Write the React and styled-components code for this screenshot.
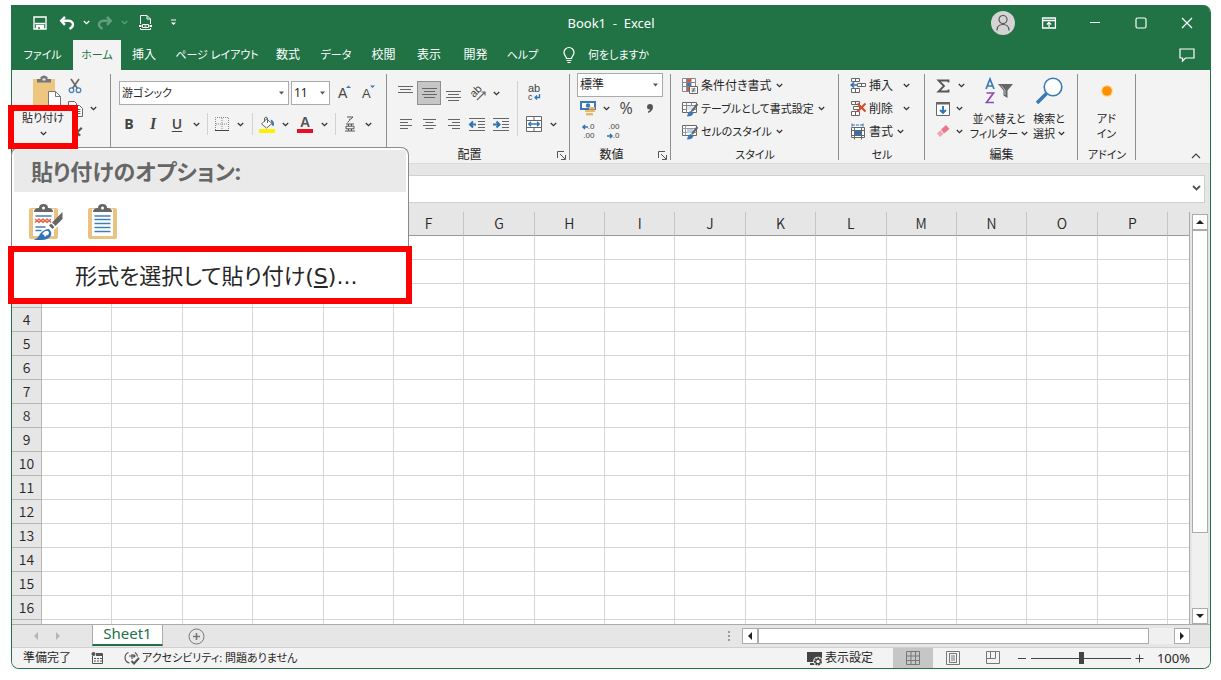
import React from 'react'
import styled, { createGlobalStyle, css } from 'styled-components'

const GlobalStyle = createGlobalStyle`
  * {
    box-sizing: border-box;
  }
  body {
    margin: 0;
    background: #fff;
    color: #262626;
    font-family: 'Noto Sans', 'Noto Sans CJK JP', sans-serif;
    font-size: 12px;
    line-height: 16px;
    font-feature-settings: 'palt';
  }
  button, input, select {
    font: inherit;
    font-feature-settings: inherit;
    color: inherit;
    border: 0;
    border-radius: 0;
    padding: 0;
    margin: 0;
    background: none;
  }
  svg {
    display: block;
    flex: none;
    overflow: visible;
  }
`

const Page = styled.main`
  padding: 5px 10px 11px 11px;
`

const Window = styled.div`
  position: relative;
  border: 1px solid #217346;
  border-top: 0;
  border-radius: 0 8px 8px 8px;
  background: #e6e6e6;
`

/* title bar */

const TitleBar = styled.header`
  display: grid;
  grid-template-columns: 1fr auto 1fr;
  align-items: center;
  height: 35px;
  background: #217346;
  color: #fff;
  border-radius: 0 7px 0 0;
`

const QuickAccess = styled.div`
  display: flex;
  align-items: center;
  padding-left: 16px;
`

const WindowControls = styled.div`
  display: flex;
  align-items: center;
  justify-content: flex-end;
`

const Slot = styled.button`
  display: flex;
  align-items: center;
  justify-content: center;
  flex: none;
  width: ${(p) => p.$w || 24}px;
  height: ${(p) => p.$h || 24}px;
  opacity: ${(p) => (p.$faded ? 0.3 : 1)};
  ${(p) =>
    p.$active &&
    css`
      background: #c6c6c6;
      border: 1px solid #8f8f8f;
    `}
`

const Title = styled.h1`
  margin: 0;
  font-size: 13px;
  font-weight: 400;
  white-space: pre;
`

const Avatar = styled.button`
  display: flex;
  justify-content: center;
  align-items: center;
  width: 24px;
  height: 24px;
  margin-right: 11px;
  border-radius: 50%;
  background: #d4d4d4;
`

/* tabs */

const TabBar = styled.nav`
  display: flex;
  align-items: stretch;
  height: 30px;
  background: #217346;
  color: #fff;
`

const Tab = styled.button`
  flex: none;
  width: ${(p) => p.$w}px;
  font-size: ${(p) => (p.$kana ? 11 : 12)}px;
  white-space: nowrap;
  color: ${(p) => (p.$active ? '#217346' : '#fff')};
  background: ${(p) => (p.$active ? '#f3f3f3' : 'transparent')};
`

const TellMe = styled.button`
  display: flex;
  align-items: center;
  gap: 12px;
  margin-left: 14px;
  font-size: 11px;
  white-space: nowrap;
`

const CommentSlot = styled(Slot)`
  margin: 3px 11px 0 auto;
`

/* ribbon */

const Ribbon = styled.section`
  display: flex;
  height: 94px;
  background: #f3f3f3;
  border-bottom: 1px solid #dadada;
`

const Group = styled.div`
  display: flex;
  flex-direction: column;
  flex: none;
  width: ${(p) => p.$w}px;
  background: linear-gradient(#8f8f8f, #8f8f8f) no-repeat right 4px / 1px 86px;
`

const GroupBody = styled.div`
  display: flex;
  flex: 1;
  min-height: 0;
  padding: ${(p) => p.$pad};
`

const GroupFoot = styled.div`
  display: flex;
  align-items: center;
  height: 16px;
  font-size: ${(p) => (p.$kana ? 11 : 12)}px;
  span {
    flex: 1;
    text-align: center;
  }
`

const Stack = styled.div`
  display: flex;
  flex-direction: column;
  gap: ${(p) => p.$gap || 0}px;
`

const Row = styled.div`
  display: flex;
  align-items: center;
  height: ${(p) => p.$h || 24}px;
  padding-left: ${(p) => p.$pad || 0}px;
`

const Rule = styled.span`
  flex: none;
  width: 1px;
  height: ${(p) => p.$h || 22}px;
  margin: 0 4px;
  background: #d2d2d2;
`

const SelectBox = styled.div`
  position: relative;
  width: ${(p) => p.$w}px;
  height: 24px;
  margin-right: 2px;
  select {
    appearance: none;
    width: 100%;
    height: 100%;
    padding-left: 2px;
    background: #fff;
    border: 1px solid #ababab;
    font-size: ${(p) => (p.$kana ? 11 : 12)}px;
  }
  svg {
    position: absolute;
    right: 5px;
    top: 10px;
    pointer-events: none;
  }
`

const Glyph = styled.span`
  font-family: ${(p) => p.$font || "'Open Sans', sans-serif"};
  font-size: ${(p) => p.$size || 14}px;
  font-weight: ${(p) => p.$weight || 700};
  font-style: ${(p) => p.$slant || 'normal'};
  text-decoration: ${(p) => p.$line || 'none'};
  text-underline-offset: 2px;
  color: #444;
`

const Command = styled.button`
  display: flex;
  align-items: center;
  height: 23px;
  font-size: ${(p) => (p.$kana ? 11 : 12)}px;
  white-space: nowrap;
  span {
    margin: 0 ${(p) => p.$gap || 4}px 0 3px;
  }
`

const BigButton = styled.button`
  display: flex;
  flex-direction: column;
  align-items: center;
  width: ${(p) => p.$w}px;
  font-size: 11px;
  line-height: 15px;
  white-space: nowrap;
`

const BigIcon = styled.span`
  display: flex;
  align-items: center;
  height: 34px;
  margin-bottom: 3px;
`

const Line = styled.span`
  display: flex;
  align-items: center;
  gap: 3px;
`

const RibbonEnd = styled.div`
  display: flex;
  flex: 1;
  align-items: flex-end;
  justify-content: flex-end;
  padding-right: 3px;
`

/* things lying over the ribbon */

const PasteCallout = styled.button`
  position: absolute;
  left: -4px;
  top: 100px;
  width: 70px;
  height: 44px;
  display: flex;
  flex-direction: column;
  align-items: center;
  gap: 6px;
  border: 6px solid #f00;
  background: #f3f3f3;
  font-size: 11px;
  line-height: 14px;
  z-index: 3;
`

const PasteMenu = styled.div`
  position: absolute;
  left: -1px;
  top: 142px;
  width: 398px;
  background: #fff;
  border: 1px solid #8a8a8a;
  border-bottom: 0;
  border-radius: 8px 8px 0 0;
  padding-top: 2px;
  z-index: 2;
`

const MenuHeading = styled.h2`
  margin: 0 2px;
  height: 42px;
  padding-left: 17px;
  background: #eaeaea;
  color: #666;
  font-size: 22px;
  font-weight: 700;
  line-height: 42px;
`

const MenuIcons = styled.div`
  display: flex;
  align-items: center;
  gap: 25px;
  height: 54px;
  padding: 6px 0 0 17px;
`

const MenuItem = styled.button`
  display: block;
  width: 404px;
  height: 58px;
  margin: 0 -4px;
  padding: 4px 0 0 61px;
  border: 6px solid #f00;
  background: #fff;
  font-family: 'DejaVu Sans', 'Noto Sans CJK JP', sans-serif;
  font-size: 22px;
  line-height: 42px;
  text-align: left;
  white-space: nowrap;
`

/* formula bar and sheet */

const FormulaRow = styled.div`
  position: relative;
  padding: 11px 5px 9px 30px;
  input {
    display: block;
    width: 100%;
    height: 28px;
    background: #fff;
    border: 1px solid #d0d0d0;
  }
  svg {
    position: absolute;
    right: 9px;
    top: 21px;
  }
`

const SheetArea = styled.div`
  display: flex;
`

const SheetClip = styled.div`
  flex: 1;
  min-width: 0;
  height: 412px;
  overflow: hidden;
  border-right: 1px solid #ababab;
`

const Grid = styled.table`
  width: 100%;
  table-layout: fixed;
  border-collapse: separate;
  border-spacing: 0;
  font-family: 'Noto Sans CJK JP', sans-serif;
  font-size: 14px;
  line-height: 18px;
  th {
    padding: 0 0 2px;
    font-weight: 350;
    background: #e6e6e6;
    border-right: 1px solid #b5b5b5;
    border-bottom: 1px solid #b5b5b5;
  }
  thead th {
    height: 24px;
    border-bottom-color: #999;
    border-right-color: #c4c4c4;
  }
  thead th:last-child {
    border-right: 0;
  }
  td {
    height: 24px;
    padding: 0;
    background: #fff;
    border-right: 1px solid #d6d6d6;
    border-bottom: 1px solid #d6d6d6;
  }
  td:last-child {
    border-right: 0;
  }
`

const VScroll = styled.div`
  display: flex;
  flex-direction: column;
  width: 16px;
  margin: 2px 2px 0 2px;
  background: #f0f0f0;
`

const HScroll = styled.div`
  display: flex;
  flex: 0 1 448px;
  height: 16px;
  margin-right: 20px;
  background: #f0f0f0;
`

const ScrollButton = styled.button`
  display: flex;
  align-items: center;
  justify-content: center;
  flex: none;
  width: 16px;
  height: 16px;
  background: #fff;
  border: 1px solid #ababab;
`

const Thumb = styled.div`
  flex: ${(p) => p.$grow};
  background: #fff;
  border: 1px solid #ababab;
`

const Track = styled.div`
  flex: ${(p) => p.$grow};
`

const SheetBar = styled.div`
  display: flex;
  align-items: center;
  height: 23px;
  padding-left: 13px;
  border-top: 1px solid #ababab;
`

const SheetTab = styled.button`
  align-self: flex-start;
  width: 71px;
  height: 21px;
  margin: 0 21px 0 23px;
  padding-bottom: 3px;
  background: #fff;
  border: 1px solid #ababab;
  border-top: 0;
  border-bottom: 2px solid #217346;
  color: #217346;
  font-size: 15px;
  line-height: 16px;
`

const Spacer = styled.span`
  flex: 1;
`

const StatusBar = styled.footer`
  display: flex;
  align-items: center;
  height: 21px;
  padding: 0 20px 0 11px;
  background: #f3f3f3;
  border-top: 1px solid #d0d0d0;
  border-radius: 0 0 7px 7px;
  white-space: nowrap;
`

const StatusItem = styled.span`
  display: flex;
  align-items: center;
  gap: 2px;
  margin-right: 20px;
  font-size: ${(p) => (p.$kana ? 11 : 12)}px;
`

const ViewButton = styled.button`
  display: flex;
  align-items: center;
  justify-content: center;
  width: 40px;
  height: 20px;
  background: ${(p) => (p.$active ? '#c6c6c6' : 'transparent')};
`

const ZoomRange = styled.input`
  appearance: none;
  width: 100px;
  height: 12px;
  background: linear-gradient(#444, #444) no-repeat center / 100% 1px;
  &::-webkit-slider-thumb {
    appearance: none;
    width: 5px;
    height: 12px;
    background: #444;
  }
`

const ZoomValue = styled.span`
  width: 43px;
  text-align: right;
  font-size: 13px;
`

/* icons */

const Svg = ({ w = 16, h = 16, children, ...rest }) => (
  <svg
    width={w}
    height={h}
    viewBox={`0 0 ${w} ${h}`}
    fill='none'
    stroke='#666'
    strokeWidth='1'
    {...rest}
  >
    {children}
  </svg>
)

const Caret = ({ color = '#333' }) => (
  <Svg w={7} h={5} stroke={color} strokeWidth='1.3'>
    <path d='M.8 1l2.7 2.6L6.2 1' />
  </Svg>
)

const DropMark = () => (
  <Svg w={5} h={4} stroke='none' fill='#555'>
    <path d='M0 .5h5L2.5 3.5z' />
  </Svg>
)

const SaveIcon = () => (
  <Svg w={14} h={14} stroke='#fff' strokeWidth='1.4'>
    <path d='M1 1h12v12H1z' />
    <path d='M2 7.5h10' />
    <path d='M3.5 13V9.500h7V13' fill='#fff' />
    <path d='M6 11v2' stroke='#217346' />
  </Svg>
)

const UndoIcon = ({ flip }) => (
  <Svg w={16} h={14} stroke='#fff' strokeWidth='2.4'>
    <g transform={flip ? 'translate(16 0) scale(-1 1)' : undefined}>
      <path d='M6 .8L2.200 4.800 6 8.800M2.500 4.800h6.800c3 0 4.700 1.600 4.700 3.700 0 2-1.400 3.300-3.500 4.300' />
    </g>
  </Svg>
)

const DocIcon = () => (
  <Svg w={13} h={15} stroke='#fff'>
    <path d='M1.5 9V.5h6.500l3.500 3.500v5M8 .5V4h3.500M1.5 13v1.500h10V13' />
    <path d='M0 11h2.500M10.500 11H13' strokeWidth='2' />
    <path d='M3.5 9.500h6v3h-6z' />
    <path d='M5.500 11h2' />
  </Svg>
)

const CustomizeIcon = () => (
  <Svg w={5} h={7} stroke='#fff'>
    <path d='M0 1h5' />
    <path d='M0 3.500h5L2.500 6z' fill='#fff' stroke='none' />
  </Svg>
)

const PersonIcon = () => (
  <Svg w={16} h={18} stroke='#555' strokeWidth='1.200'>
    <circle cx='8' cy='5.500' r='4' />
    <path d='M2 16.500c0-4 2.500-6 6-6s6 2 6 6' />
  </Svg>
)

const RibbonDisplayIcon = () => (
  <Svg w={14} h={12} stroke='#fff' strokeWidth='1.300'>
    <path d='M.6 1h12.800v10H.6zM.6 3.500h12.800' />
    <path d='M7 10V5.500M4.800 7.500L7 5.300l2.200 2.200' />
  </Svg>
)

const BulbIcon = () => (
  <Svg w={14} h={17} stroke='#fff' strokeWidth='1.200'>
    <path d='M4.500 11.500c0-2-2.500-3-2.500-6a5 5 0 0 1 10 0c0 3-2.500 4-2.500 6zM4.500 13.500h5M5.500 15.500h3' />
  </Svg>
)

const CommentIcon = () => (
  <Svg w={16} h={14} stroke='#fff' strokeWidth='1.200'>
    <path d='M1 1h14v9H6.500L3.500 13v-3H1z' />
  </Svg>
)

const PasteIcon = () => (
  <Svg w={30} h={34} stroke='none'>
    <path d='M0 5h22v28H0z' fill='#edc680' />
    <path d='M4 5h3.500V3q3.500-3 7 0v2H18v3.500H4z' fill='#777' />
    <path d='M9.500 4.500h3v2h-3z' fill='#eee' />
    <path d='M15.500 17.500h7l5 5v11h-12z' fill='#fff' stroke='#777' />
    <path d='M22.500 17.500v5h5' stroke='#777' fill='none' />
  </Svg>
)

const CutIcon = () => (
  <Svg w={14} h={16} strokeWidth='1.600'>
    <path d='M3 1l6.500 9.500M11 1L4.500 10.500' stroke='#666' />
    <circle cx='3.500' cy='12.200' r='2.300' stroke='#4a83bd' strokeWidth='1.300' />
    <circle cx='10.500' cy='12.200' r='2.300' stroke='#4a83bd' strokeWidth='1.300' />
  </Svg>
)

const CopyIcon = () => (
  <Svg w={15} h={16}>
    <path d='M.5.5h6l2 2v9h-8z' fill='#fff' />
    <path d='M5.500 4.500h6l3 3v8h-9z' fill='#fff' />
    <path d='M7.500 8.500h5M7.500 10.500h5M7.500 12.500h5' />
  </Svg>
)

const PainterIcon = () => (
  <Svg w={16} h={16} stroke='none'>
    <path d='M1 9l4-3 5 5-4 4-3-1z' fill='#edc37c' />
    <path d='M7 6l3 1 4-4 1.500 1.500-4 4L14 11l-2 1.500z' fill='#555' />
  </Svg>
)

const FontSizeIcon = ({ down }) => (
  <Svg w={14} h={18} stroke='none'>
    <text x='1' y='14' fontFamily='Liberation Sans' fontSize={down ? 13 : 14} fill='#444'>
      A
    </text>
    <path d={down ? 'M9 1.500h5L11.500 4z' : 'M9 4h5L11.500 1.500z'} fill='#3b78b8' />
  </Svg>
)

const BorderIcon = () => (
  <Svg w={14} h={14} stroke='#888'>
    <path d='M.5 13V.5h13V13M7 1v12M1 7h12' strokeDasharray='1 1' />
    <path d='M0 13.500h14' stroke='#444' />
  </Svg>
)

const BucketIcon = () => (
  <Svg w={16} h={17}>
    <path d='M7.500 3L2.500 8l5 4L13 7.500 7 2.500' fill='#fff' />
    <path d='M5.500 6V2q1.500-2 3 0v5' />
    <path d='M11.500 3.500q4 1 3.500 6l-1.500.5-1-3z' fill='#3b78b8' stroke='none' />
    <path d='M0 13h16v4H0z' fill='#ffef00' stroke='none' />
  </Svg>
)

const FontColorIcon = () => (
  <Svg w={16} h={17} stroke='none'>
    <text x='8' y='11' textAnchor='middle' fontFamily='Liberation Sans' fontSize='14' fontWeight='700' fill='#555'>
      A
    </text>
    <path d='M0 13h16v4H0z' fill='#e81123' />
  </Svg>
)

const RubyIcon = () => (
  <Svg w={10} h={16} stroke='#555'>
    <path d='M2 1h6L5.500 3.500M5 2.500Q5 5 2.500 6.500' />
    <path d='M1 8h8M0 15h10M3.500 8v2M6.500 8v2M1 10.200h8v2.600H1zM3.500 13v2M6.500 13v2' />
  </Svg>
)

const lineSets = {
  top: ['M0 1.500h15', 'M2 4.500h11', 'M0 7.500h15'],
  middle: ['M0 3.500h15', 'M2 6.500h11', 'M0 9.500h15', 'M2 12.500h11'],
  bottom: ['M0 6.500h15', 'M2 9.500h11', 'M0 12.500h15', 'M2 15.500h11'],
  left: ['M2 3.500h12', 'M2 6.500h8', 'M2 9.500h12', 'M2 12.500h8'],
  center: ['M1 3.500h13', 'M3.500 6.500h8', 'M1 9.500h13', 'M3.500 12.500h8'],
  right: ['M2 3.500h12', 'M6 6.500h8', 'M2 9.500h12', 'M6 12.500h8'],
}

const LinesIcon = ({ kind }) => (
  <Svg w={15} h={16}>
    {lineSets[kind].map((d) => (
      <path key={d} d={d} />
    ))}
  </Svg>
)

const IndentIcon = ({ inward }) => (
  <Svg w={16} h={14}>
    <path d='M0 1.500h16M9 4.500h7M9 7.500h7M9 10.500h7M0 13.500h16' />
    <path
      d={inward ? 'M0 7.500h6M3.500 4.500l3 3-3 3' : 'M7 7.500H1M4 4.500l-3 3 3 3'}
      stroke='#2e74b5'
      strokeWidth='2'
    />
  </Svg>
)

const OrientationIcon = () => (
  <Svg w={17} h={16} stroke='none'>
    <text
      transform='translate(5 13) rotate(-45)'
      fontFamily='Liberation Sans'
      fontSize='11'
      fill='#444'
    >
      ab
    </text>
    <path d='M8 15L15.500 7.500M12.500 7h3.500v3.500' stroke='#666' strokeWidth='1.200' />
  </Svg>
)

const WrapIcon = () => (
  <Svg w={14} h={18} stroke='none'>
    <g fontFamily='Liberation Sans' fontSize='11' fill='#444'>
      <text x='1' y='8'>ab</text>
      <text x='1' y='16' fontSize='9'>c</text>
    </g>
    <path d='M12.500 10v3.500H8M10 11.500l-2 2 2 2' stroke='#2e74b5' strokeWidth='1.300' />
  </Svg>
)

const MergeIcon = () => (
  <Svg w={16} h={16}>
    <path d='M.5.5h15v15H.5zM.5 4.500h15M.5 11.500h15M8 .5v4M8 11.500v4' fill='#fff' />
    <path d='M2.500 8h11M5 5.800L2.700 8 5 10.200M11 5.800L13.300 8 11 10.200' stroke='#2e74b5' strokeWidth='1.400' />
  </Svg>
)

const MoneyIcon = () => (
  <Svg w={16} h={15} stroke='none'>
    <path d='M0 0h16v9H0z' fill='#3b78b8' />
    <path d='M2 2h12v5H2z' fill='#fff' />
    <circle cx='8' cy='4.500' r='2.200' fill='#3b78b8' />
    <path d='M9 6h6v2.500H9zM9 9h6v2H9zM5 9h4v2H5zM6 12h7v2.500H6z' fill='#edb76a' />
  </Svg>
)

const DecimalMark = styled.span`
  display: grid;
  justify-items: end;
  font-family: 'Liberation Sans', sans-serif;
  font-size: 8px;
  line-height: 9px;
  color: #444;
  span {
    display: flex;
    align-items: center;
  }
`

const TinyArrow = ({ right }) => (
  <Svg w={6} h={6} stroke='#2e74b5' strokeWidth='1.500'>
    <path d={right ? 'M0 3h5M3 1l2 2-2 2' : 'M6 3H1M3 1L1 3l2 2'} />
  </Svg>
)

const LauncherIcon = () => (
  <Svg w={9} h={9} stroke='#555'>
    <path d='M.5 7V.5H7M3 3l5 5M8.500 4v4.500H4' />
  </Svg>
)

const CondIcon = () => (
  <Svg w={16} h={16}>
    <path d='M.5.5h13v13H.5zM.5 4.500h13M.5 8.500h13M4.500.5v13M9 .5v13' fill='#fff' stroke='#888' />
    <path d='M5 1h4v3H5zM5 9h3v4H5z' fill='#e0563c' stroke='none' />
    <path d='M5 5h4v3H5z' fill='#3b78b8' stroke='none' />
    <path d='M7.500 8.500h8v7h-8z' fill='#fff' />
    <path d='M9.500 11h4M9.500 13h4M12.500 9.800l-2 4.500' />
  </Svg>
)

const StyleIcon = ({ cell }) => (
  <Svg w={16} h={16}>
    <path d='M.5 1.500h14v10H.5z' fill='#fff' />
    {cell ? (
      <path d='M3.500 1.500v10M.5 4.500h14M.5 8.500h14' stroke='#999' />
    ) : (
      <path d='M4.500 1.500v10M9.500 1.500v10M.5 4.500h14M.5 8.500h14' stroke='#888' />
    )}
    <path d='M5 5h6v4H5z' fill={cell ? '#b5d3ee' : '#d7e7f5'} stroke='none' />
    <path d='M15.500 3L10 10' stroke='#666' strokeWidth='2.200' />
    <path d='M5 15.500q1-5 4-5.500l2.500 2q-1 3.500-6.500 3.500z' fill='#3b78b8' stroke='none' />
  </Svg>
)

const InsertIcon = () => (
  <Svg w={16} h={16}>
    <path d='M1.500.5h8v3h-8zM5.500.5v3M7.500 5.500h8v3h-8zM11.500 5.500v3M1.500 10.500h8v4h-8zM5.500 10.500v4' fill='#fff' />
    <path d='M8 7H1M4 4.500L1.300 7 4 9.500' stroke='#2e74b5' strokeWidth='1.700' />
  </Svg>
)

const DeleteIcon = () => (
  <Svg w={16} h={16}>
    <path d='M1.500.5h8v3h-8zM5.500.5v3M3.500 5.500h6v3h-6zM1.500 10.500h8v4h-8zM5.500 10.500v4' fill='#fff' />
    <path d='M7.500 2.500l8 8M15.500 2.500l-8 8' stroke='#d9482b' strokeWidth='1.900' />
  </Svg>
)

const FormatIcon = () => (
  <Svg w={16} h={17}>
    <path d='M2 .5v3M13 .5v3M2 2h11' stroke='#2e74b5' strokeDasharray='3 1' />
    <path d='M1.500 4.500h13v10h-13zM4.500 4.500v12M11.500 4.500v12M1.500 7.500h13M1.500 12.500h13' fill='#fff' />
    <path d='M5 8h6v4H5z' fill='#2e74b5' stroke='none' />
  </Svg>
)

const SumIcon = () => (
  <Svg w={13} h={14} stroke='#555' strokeWidth='1.800'>
    <path d='M11.500 3.500V1.500H1.500L7 7l-5.500 5.500h10v-2' />
  </Svg>
)

const FillIcon = () => (
  <Svg w={14} h={14}>
    <path d='M.5.5h13v13H.5z' fill='#fff' />
    <path d='M0 1.500h14' strokeWidth='2' />
    <path d='M7 4v7M4 8l3 3 3-3' stroke='#2e74b5' strokeWidth='1.900' />
  </Svg>
)

const EraserIcon = () => (
  <Svg w={14} h={13} stroke='none'>
    <path d='M5 4.500L10 0l3.500 4L8 8.500z' fill='#e8798d' />
    <path d='M4.300 5.200L1 8.500 4 12l3.500-3z' fill='#f0a5b3' />
  </Svg>
)

const SortIcon = () => (
  <Svg w={28} h={28}>
    <path d='M1 12L5 2l4 10M2.500 9h5' stroke='#3b78b8' strokeWidth='1.700' />
    <path d='M1.500 16h7l-7 9.500h7.500' stroke='#8e4bb5' strokeWidth='1.700' />
    <path d='M13 7h15l-5.500 6.500V21l-4-2.500v-5z' fill='#666' stroke='none' />
    <path d='M16 8.500l4 4.500v5' stroke='#bbb' />
  </Svg>
)

const FindIcon = () => (
  <Svg w={28} h={28} stroke='#3b78b8'>
    <circle cx='18' cy='10' r='8.800' strokeWidth='1.600' fill='#fff' />
    <path d='M11.500 16.500L2 26' strokeWidth='3.500' />
  </Svg>
)

const AddinIcon = () => (
  <Svg w={12} h={12} stroke='none'>
    <circle cx='6' cy='6' r='6' fill='#ffd79a' />
    <circle cx='6' cy='6' r='4.800' fill='#ff9100' />
  </Svg>
)

const ClipboardIcon = ({ brush }) => (
  <Svg w={brush ? 34 : 30} h={36} stroke='none'>
    <rect x='0' y='4' width='29' height='31' rx='2' fill='#eac282' />
    <path d='M4 5h21v27H4z' fill='#fff' />
    <path d='M5 8q0-4 5-4 0-4 4.500-4T19 4q5 0 5 4z' fill='#666' />
    <circle cx='14.500' cy='4' r='1.500' fill='#fff' />
    <g stroke='#3f7fb8' strokeWidth='1.700'>
      {brush ? (
        <path d='M6.500 12h16M6.500 23h10M6.500 26.500h6' />
      ) : (
        <path d='M6.500 12h16M6.500 15.500h16M6.500 19.500h16M6.500 23.500h16M6.500 27.500h16' />
      )}
    </g>
    {brush && (
      <>
        <path
          d='M6 15l2 2 2-2 2 2 2-2 2 2 2-2 2 2 2-2M6 18.500l2-2 2 2 2-2 2 2 2-2 2 2 2-2 2 2'
          fill='none'
          stroke='#e2684a'
          strokeWidth='1.300'
        />
        <path d='M34 9v8l-9 9-5-5z' fill='#fff' />
        <path d='M33.500 8v7l-7 7-3.500-3.500z' fill='#666' />
        <path d='M22 19.500l3.500 3.500-2 2-3.500-3.500z' fill='#666' />
        <path d='M4 36q5-1 7-6 4-5 9-5 4 4 1 8-3 3-8 3z' fill='#2e74b5' />
        <path d='M13 30q3-4 6-3 2 2 0 4-2 0-3 2-1-3-3-3z' fill='#fff' />
      </>
    )}
  </Svg>
)

const Arrow = ({ dir, color = '#222' }) => {
  const turn = { up: 0, right: 90, down: 180, left: 270 }[dir]
  return (
    <Svg w={8} h={8} stroke='none' fill={color}>
      <path d='M0 6l4-4 4 4z' transform={`rotate(${turn} 4 4)`} />
    </Svg>
  )
}

const PlusCircle = () => (
  <Svg w={17} h={17} stroke='#777'>
    <circle cx='8.500' cy='8.500' r='7.500' />
    <path d='M8.500 5v7M5 8.500h7' strokeWidth='1.600' />
  </Svg>
)

const DotsIcon = () => (
  <Svg w={3} h={12} stroke='none' fill='#999'>
    <path d='M0 1h2v2H0zM0 5h2v2H0zM0 9h2v2H0z' />
  </Svg>
)

const MacroIcon = () => (
  <Svg w={13} h={12} stroke='#555'>
    <path d='M1.500 4v7.500h10V1.500H5' />
    <path d='M5 3h7' strokeWidth='2' />
    <circle cx='2.500' cy='2' r='2' fill='#555' stroke='none' />
    <path d='M3 6.500h8M3 9h8' strokeDasharray='2 1' />
  </Svg>
)

const AccessIcon = () => (
  <Svg w={16} h={14} stroke='#555' strokeWidth='1.200'>
    <path d='M4.500 1.500a5.500 5.500 0 0 0 1 10.500M11 1.500q2.500 2 2.500 4M5 5h6M8 3v5M9.500 3.500L11 5 9.500 6.500' />
    <path d='M7.500 10l2.500 2.500 5-5.500' strokeWidth='1.900' />
  </Svg>
)

const DisplayIcon = () => (
  <Svg w={16} h={15} stroke='none'>
    <path d='M0 1h15v10H0zM3 12h5v2H3z' fill='#444' />
    <circle cx='11' cy='10.500' r='4.800' fill='#f3f3f3' />
    <circle cx='11' cy='10.500' r='3' stroke='#444' strokeWidth='2' strokeDasharray='2 .6' />
    <circle cx='11' cy='10.500' r='2.200' stroke='#444' />
  </Svg>
)

const NormalViewIcon = () => (
  <Svg w={14} h={14}>
    <path d='M.5.5h13v13H.5zM5 .5v13M9.500.5v13M.5 5h13M.5 9.500h13' stroke='#777' />
  </Svg>
)

const PageViewIcon = () => (
  <Svg w={14} h={14} stroke='#777'>
    <path d='M.5.5h13v13H.5zM3.500 2.500h7v9h-7zM5 5h4M5 7h4M5 9h4' />
  </Svg>
)

const BreakViewIcon = () => (
  <Svg w={14} h={14} stroke='#777'>
    <path d='M.5.5h13v12H.5zM.5 7.500h9M4.500.5v7M9.500.5v7' />
  </Svg>
)

/* parts */

const tabs = [
  { name: 'ファイル', w: 61, kana: true },
  { name: 'ホーム', w: 48, kana: true, active: true },
  { name: '挿入', w: 46 },
  { name: 'ページ レイアウト', w: 100, kana: true },
  { name: '数式', w: 42 },
  { name: 'データ', w: 54, kana: true },
  { name: '校閲', w: 41 },
  { name: '表示', w: 50 },
  { name: '開発', w: 43 },
  { name: 'ヘルプ', w: 51, kana: true },
]
const columns = 'ABCDEFGHIJKLMNOP'.split('')
const rows = Array.from({ length: 16 }, (_, i) => i + 1)

const CaretSlot = ({ w = 16, label }) => (
  <Slot $w={w} aria-label={label}>
    <Caret />
  </Slot>
)

const Dropdown = ({ w, label, value, kana }) => (
  <SelectBox $w={w} $kana={kana}>
    <select aria-label={label}>
      <option>{value}</option>
    </select>
    <DropMark />
  </SelectBox>
)

const Footer = ({ children, launcher, kana }) => (
  <GroupFoot $kana={kana}>
    <span>{children}</span>
    {launcher && (
      <Slot $w={18} $h={16} aria-label={`${children}の設定`}>
        <LauncherIcon />
      </Slot>
    )}
  </GroupFoot>
)

const ClipboardGroup = () => (
  <Group $w={99}>
    <GroupBody $pad='4px 0 0 18px'>
      <BigButton $w={35} aria-label='貼り付け'>
        <BigIcon>
          <PasteIcon />
        </BigIcon>
      </BigButton>
      <Stack>
        <Slot $w={20} $h={23} aria-label='切り取り'>
          <CutIcon />
        </Slot>
        <Row $h={23}>
          <Slot $w={20} $h={23} aria-label='コピー'>
            <CopyIcon />
          </Slot>
          <CaretSlot label='コピーのオプション' />
        </Row>
        <Slot $w={20} $h={23} aria-label='書式のコピー'>
          <PainterIcon />
        </Slot>
      </Stack>
    </GroupBody>
  </Group>
)

const FontGroup = () => (
  <Group $w={276}>
    <GroupBody $pad='11px 0 0 6px'>
      <Stack $gap={7}>
        <Row $pad={2}>
          <Dropdown w={170} kana label='フォント' value='游ゴシック' />
          <Dropdown w={39} label='フォント サイズ' value='11' />
          <Slot aria-label='フォント サイズの拡大'>
            <FontSizeIcon />
          </Slot>
          <Slot aria-label='フォント サイズの縮小'>
            <FontSizeIcon down />
          </Slot>
        </Row>
        <Row>
          <Slot aria-label='太字'>
            <Glyph>B</Glyph>
          </Slot>
          <Slot aria-label='斜体'>
            <Glyph $font="'Liberation Serif', serif" $size={16} $slant='italic'>I</Glyph>
          </Slot>
          <Slot aria-label='下線'>
            <Glyph $weight={600} $line='underline'>U</Glyph>
          </Slot>
          <CaretSlot w={14} label='下線の種類' />
          <Rule />
          <Slot $w={20} aria-label='罫線'>
            <BorderIcon />
          </Slot>
          <CaretSlot label='罫線の種類' />
          <Rule />
          <Slot $w={20} aria-label='塗りつぶしの色'>
            <BucketIcon />
          </Slot>
          <CaretSlot label='塗りつぶしの色の選択' />
          <Slot aria-label='フォントの色'>
            <FontColorIcon />
          </Slot>
          <CaretSlot w={14} label='フォントの色の選択' />
          <Rule />
          <Slot $w={20} aria-label='ふりがな'>
            <RubyIcon />
          </Slot>
          <CaretSlot label='ふりがなのオプション' />
        </Row>
      </Stack>
    </GroupBody>
  </Group>
)

const AlignGroup = () => (
  <Group $w={183}>
    <GroupBody $pad='11px 0 0 6px'>
      <Stack $gap={7}>
        <Row>
          <Slot aria-label='上揃え'><LinesIcon kind='top' /></Slot>
          <Slot $active aria-label='上下中央揃え'><LinesIcon kind='middle' /></Slot>
          <Slot aria-label='下揃え'><LinesIcon kind='bottom' /></Slot>
          <Slot aria-label='方向'><OrientationIcon /></Slot>
          <CaretSlot w={14} label='方向の選択' />
        </Row>
        <Row>
          <Slot aria-label='左揃え'><LinesIcon kind='left' /></Slot>
          <Slot aria-label='中央揃え'><LinesIcon kind='center' /></Slot>
          <Slot aria-label='右揃え'><LinesIcon kind='right' /></Slot>
          <Slot aria-label='インデントを減らす'><IndentIcon /></Slot>
          <Slot aria-label='インデントを増やす'><IndentIcon inward /></Slot>
        </Row>
      </Stack>
      <Rule $h={55} />
      <Stack $gap={7}>
        <Slot aria-label='折り返して全体を表示する'><WrapIcon /></Slot>
        <Row>
          <Slot aria-label='セルを結合して中央揃え'><MergeIcon /></Slot>
          <CaretSlot w={14} label='結合のオプション' />
        </Row>
      </Stack>
    </GroupBody>
    <Footer launcher>配置</Footer>
  </Group>
)

const NumberGroup = () => (
  <Group $w={101}>
    <GroupBody $pad='3px 0 0 7px'>
      <Stack>
        <Dropdown w={86} label='表示形式' value='標準' />
        <Row $h={22}>
          <Slot $w={22} aria-label='通貨'><MoneyIcon /></Slot>
          <CaretSlot w={14} label='通貨の選択' />
          <Slot $w={26} aria-label='パーセント'>
            <Glyph $size={16} $weight={400}>%</Glyph>
          </Slot>
          <Slot $w={22} aria-label='桁区切り'>
            <Svg w={6} h={9} stroke='none' fill='#555'>
              <path d='M3 0q3 0 3 3 0 4-5 6V7.500Q3 6.500 3 5.500 0 5.500 0 3 0 0 3 0z' />
            </Svg>
          </Slot>
        </Row>
        <Row>
          <Slot $w={22} aria-label='小数点以下の桁数を増やす'>
            <DecimalMark>
              <span><TinyArrow />.0</span>
              <span>.00</span>
            </DecimalMark>
          </Slot>
          <Slot $w={28} aria-label='小数点以下の桁数を減らす'>
            <DecimalMark>
              <span>.00</span>
              <span><TinyArrow right />.0</span>
            </DecimalMark>
          </Slot>
        </Row>
      </Stack>
    </GroupBody>
    <Footer launcher>数値</Footer>
  </Group>
)

const StylesGroup = () => (
  <Group $w={168}>
    <GroupBody $pad='4px 0 0 11px'>
      <Stack>
        <Command><CondIcon /><span>条件付き書式</span><Caret /></Command>
        <Command $kana><StyleIcon /><span>テーブルとして書式設定</span><Caret /></Command>
        <Command $kana><StyleIcon cell /><span>セルのスタイル</span><Caret /></Command>
      </Stack>
    </GroupBody>
    <Footer kana>スタイル</Footer>
  </Group>
)

const CellsGroup = () => (
  <Group $w={86}>
    <GroupBody $pad='4px 0 0 11px'>
      <Stack>
        <Command $gap={10}><InsertIcon /><span>挿入</span><Caret /></Command>
        <Command $gap={10}><DeleteIcon /><span>削除</span><Caret /></Command>
        <Command><FormatIcon /><span>書式</span><Caret /></Command>
      </Stack>
    </GroupBody>
    <Footer kana>セル</Footer>
  </Group>
)

const EditGroup = () => (
  <Group $w={153}>
    <GroupBody $pad='4px 0 0 8px'>
      <Stack>
        <Row $h={23}><Slot $w={20} aria-label='合計'><SumIcon /></Slot><CaretSlot label='関数の選択' /></Row>
        <Row $h={23}><Slot $w={20} aria-label='フィル'><FillIcon /></Slot><CaretSlot w={12} label='フィルの方向' /></Row>
        <Row $h={23}><Slot $w={20} aria-label='クリア'><EraserIcon /></Slot><CaretSlot w={12} label='クリアの対象' /></Row>
      </Stack>
      <BigButton $w={60}>
        <BigIcon><SortIcon /></BigIcon>
        <Line>並べ替えと</Line>
        <Line>フィルター <Caret /></Line>
      </BigButton>
      <BigButton $w={40}>
        <BigIcon><FindIcon /></BigIcon>
        <Line>検索と</Line>
        <Line>選択 <Caret /></Line>
      </BigButton>
    </GroupBody>
    <Footer>編集</Footer>
  </Group>
)

const AddinGroup = () => (
  <Group $w={58}>
    <GroupBody $pad='4px 0 0 0'>
      <BigButton $w={57}>
        <BigIcon><AddinIcon /></BigIcon>
        <Line>アド</Line>
        <Line>イン</Line>
      </BigButton>
    </GroupBody>
    <Footer kana>アドイン</Footer>
  </Group>
)

const Sheet = () => (
  <SheetArea>
    <SheetClip>
      <Grid>
        <colgroup>
          <col width='30' />
          {columns.map((c) => (
            <col key={c} />
          ))}
          <col width='21' />
        </colgroup>
        <thead>
          <tr>
            <th />
            {columns.map((c) => (
              <th key={c} scope='col'>{c}</th>
            ))}
            <th />
          </tr>
        </thead>
        <tbody>
          {rows.map((r) => (
            <tr key={r}>
              <th scope='row'>{r}</th>
              {columns.map((c) => (
                <td key={c} />
              ))}
              <td />
            </tr>
          ))}
          <tr>
            <th />
            {columns.map((c) => (
              <td key={c} />
            ))}
            <td />
          </tr>
        </tbody>
      </Grid>
    </SheetClip>
    <VScroll>
      <ScrollButton aria-label='上へ'><Arrow dir='up' /></ScrollButton>
      <Thumb $grow={80} />
      <Track $grow={20} />
      <ScrollButton aria-label='下へ'><Arrow dir='down' /></ScrollButton>
    </VScroll>
  </SheetArea>
)

export default function App() {
  return (
    <Page>
      <GlobalStyle />
      <Window>
        <TitleBar>
          <QuickAccess>
            <Slot aria-label='保存'><SaveIcon /></Slot>
            <Slot $w={30} aria-label='元に戻す'><UndoIcon /></Slot>
            <Slot $w={8} aria-label='元に戻す履歴'><Caret color='#fff' /></Slot>
            <Slot $w={30} $faded aria-label='やり直し'><UndoIcon flip /></Slot>
            <Slot $w={8} $faded aria-label='やり直し履歴'><Caret color='#fff' /></Slot>
            <Slot $w={34} aria-label='印刷プレビュー'><DocIcon /></Slot>
            <Slot $w={22} aria-label='クイック アクセスのカスタマイズ'><CustomizeIcon /></Slot>
          </QuickAccess>
          <Title>Book1  -  Excel</Title>
          <WindowControls>
            <Avatar aria-label='アカウント'><PersonIcon /></Avatar>
            <Slot $w={46} aria-label='リボンの表示オプション'><RibbonDisplayIcon /></Slot>
            <Slot $w={46} aria-label='最小化'>
              <Svg w={12} h={12} stroke='#fff'><path d='M1 5.500h10' /></Svg>
            </Slot>
            <Slot $w={46} aria-label='最大化'>
              <Svg w={12} h={12} stroke='#fff' strokeWidth='1.200'>
                <rect x='1' y='1' width='10' height='10' rx='1.500' />
              </Svg>
            </Slot>
            <Slot $w={46} aria-label='閉じる'>
              <Svg w={12} h={12} stroke='#fff' strokeWidth='1.200'><path d='M1 1l10 10M11 1L1 11' /></Svg>
            </Slot>
          </WindowControls>
        </TitleBar>

        <TabBar>
          {tabs.map((t) => (
            <Tab key={t.name} $w={t.w} $kana={t.kana} $active={t.active}>
              {t.name}
            </Tab>
          ))}
          <TellMe><BulbIcon />何をしますか</TellMe>
          <CommentSlot aria-label='コメント'><CommentIcon /></CommentSlot>
        </TabBar>

        <Ribbon>
          <ClipboardGroup />
          <FontGroup />
          <AlignGroup />
          <NumberGroup />
          <StylesGroup />
          <CellsGroup />
          <EditGroup />
          <AddinGroup />
          <RibbonEnd>
            <Slot $w={22} $h={14} aria-label='リボンを折りたたむ'>
              <Svg w={10} h={6} stroke='#444' strokeWidth='1.200'><path d='M1 5l4-4 4 4' /></Svg>
            </Slot>
          </RibbonEnd>
        </Ribbon>

        <PasteCallout>
          貼り付け
          <Caret />
        </PasteCallout>

        <PasteMenu>
          <MenuHeading>貼り付けのオプション:</MenuHeading>
          <MenuIcons>
            <button aria-label='元の書式を保持'><ClipboardIcon brush /></button>
            <button aria-label='値のみ'><ClipboardIcon /></button>
          </MenuIcons>
          <MenuItem>形式を選択して貼り付け(<u>S</u>)...</MenuItem>
        </PasteMenu>

        <FormulaRow>
          <input aria-label='数式バー' />
          <Svg w={9} h={7} stroke='#555' strokeWidth='1.900'><path d='M1 1l3.500 3.500L8 1' /></Svg>
        </FormulaRow>

        <Sheet />

        <SheetBar>
          <Slot $w={22} $h={16} aria-label='前のシート'><Arrow dir='left' color='#b5b5b5' /></Slot>
          <Slot $w={22} $h={16} aria-label='次のシート'><Arrow dir='right' color='#b5b5b5' /></Slot>
          <SheetTab>Sheet1</SheetTab>
          <Slot $w={24} $h={20} aria-label='新しいシート'><PlusCircle /></Slot>
          <Spacer />
          <Slot $w={26} $h={16} aria-label='幅の変更'><DotsIcon /></Slot>
          <HScroll>
            <ScrollButton aria-label='左へ'><Arrow dir='left' /></ScrollButton>
            <Thumb $grow={94} />
            <Track $grow={6} />
            <ScrollButton aria-label='右へ'><Arrow dir='right' /></ScrollButton>
          </HScroll>
        </SheetBar>

        <StatusBar>
          <StatusItem>準備完了</StatusItem>
          <StatusItem><MacroIcon /></StatusItem>
          <StatusItem $kana><AccessIcon />アクセシビリティ: 問題ありません</StatusItem>
          <Spacer />
          <StatusItem><DisplayIcon />表示設定</StatusItem>
          <ViewButton $active aria-label='標準'><NormalViewIcon /></ViewButton>
          <ViewButton aria-label='ページ レイアウト'><PageViewIcon /></ViewButton>
          <ViewButton aria-label='改ページ プレビュー'><BreakViewIcon /></ViewButton>
          <Slot $w={18} $h={20} aria-label='縮小'>
            <Svg w={8} h={8} stroke='#444'><path d='M0 4.500h8' /></Svg>
          </Slot>
          <ZoomRange type='range' min='10' max='190' defaultValue='100' aria-label='ズーム' />
          <Slot $w={16} $h={20} aria-label='拡大'>
            <Svg w={9} h={9} stroke='#444'><path d='M.5 4.500h8M4.500.5v8' /></Svg>
          </Slot>
          <ZoomValue>100%</ZoomValue>
        </StatusBar>
      </Window>
    </Page>
  )
}
